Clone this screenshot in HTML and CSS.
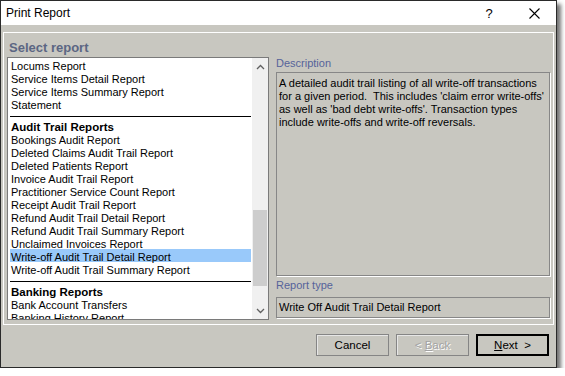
FILE: index.html
```html
<!DOCTYPE html>
<html lang="en">
<head>
    <meta charset="UTF-8" />
    <title>Print Report</title>
    <link rel="stylesheet" href="styles.css">
</head>
<body>
    <div class="window">
        <div class="titlebar">
            <span class="title">Print Report</span>
            <span class="help">?</span>
            <span class="close">
                <svg width="11" height="11" viewBox="0 0 11 11"><path d="M0.5 0.5 L10.5 10.5 M10.5 0.5 L0.5 10.5" stroke="#000" stroke-width="1.1" fill="none"/></svg>
            </span>
        </div>

        <div class="panel">
            <div class="panel-head">Select report</div>
            <div class="panel-body">
                <div class="listbox">
                    <ul class="items">
                        <li>Locums Report</li>
                        <li>Service Items Detail Report</li>
                        <li>Service Items Summary Report</li>
                        <li>Statement</li>
                        <li class="sep"></li>
                        <li class="group">Audit Trail Reports</li>
                        <li>Bookings Audit Report</li>
                        <li>Deleted Claims Audit Trail Report</li>
                        <li>Deleted Patients Report</li>
                        <li>Invoice Audit Trail Report</li>
                        <li>Practitioner Service Count Report</li>
                        <li>Receipt Audit Trail Report</li>
                        <li>Refund Audit Trail Detail Report</li>
                        <li>Refund Audit Trail Summary Report</li>
                        <li>Unclaimed Invoices Report</li>
                        <li class="selected">Write-off Audit Trail Detail Report</li>
                        <li>Write-off Audit Trail Summary Report</li>
                        <li class="sep"></li>
                        <li class="group">Banking Reports</li>
                        <li>Bank Account Transfers</li>
                        <li>Banking History Report</li>
                    </ul>
                    <div class="scrollbar">
                        <div class="arrow">
                            <svg width="9" height="6" viewBox="0 0 9 6"><path d="M1 5 L4.5 1.5 L8 5" stroke="#606060" stroke-width="1.3" fill="none"/></svg>
                        </div>
                        <div class="track"><div class="thumb"></div></div>
                        <div class="arrow">
                            <svg width="9" height="6" viewBox="0 0 9 6"><path d="M1 1 L4.5 4.5 L8 1" stroke="#606060" stroke-width="1.3" fill="none"/></svg>
                        </div>
                    </div>
                </div>

                <div class="details">
                    <div class="label">Description</div>
                    <div class="desc">
                        A detailed audit trail listing of all write-off transactions<br>
                        for a given period.&nbsp; This includes 'claim error write-offs'<br>
                        as well as 'bad debt write-offs'. Transaction types<br>
                        include write-offs and write-off reversals.
                    </div>
                    <div class="label label-type">Report type</div>
                    <div class="field">Write Off Audit Trail Detail Report</div>
                </div>
            </div>
        </div>

        <div class="buttons">
            <button class="btn">Cancel</button>
            <button class="btn disabled">&lt; <u>B</u>ack</button>
            <button class="btn default"><u>N</u>ext&nbsp; &gt;</button>
        </div>
    </div>
</body>
</html>
```

FILE: styles.css
```css
:root {
    --face: #c8c7c0;
    --label: #56639a;
}

body {
    margin: 0;
    background: #fff;
    font-family: "Liberation Sans", Arial, sans-serif;
    font-size: 11px;
    color: #000;
}

.window {
    width: 557px;
    height: 368px;
    box-sizing: border-box;
    border: 1px solid #2a2a2a;
    background: var(--face);
    box-shadow: 4px 4px 4px rgba(0, 0, 0, 0.55);
    display: flex;
    flex-direction: column;
}

.titlebar {
    height: 24px;
    background: #fff;
    display: flex;
    align-items: center;
    padding-left: 5px;
}

.title {
    font-size: 12px;
    flex: 1;
}

.help {
    font-size: 13px;
    width: 20px;
    text-align: center;
    margin-right: 24px;
}

.close {
    width: 22px;
    margin-right: 11px;
    display: flex;
    justify-content: center;
}

.panel {
    margin: 7px 2px 0 2px;
    height: 293px;
    box-sizing: border-box;
    border: 1px solid #fff;
    display: flex;
    flex-direction: column;
}

.panel-head {
    padding: 6px 0 0 5px;
    height: 18px;
    line-height: 18px;
    font-size: 13px;
    font-weight: bold;
    color: #5b6683;
}

.panel-body {
    display: flex;
    padding-left: 3px;
}

/* list box */
.listbox {
    width: 262px;
    height: 263px;
    box-sizing: border-box;
    border: 1px solid #7a7a7a;
    background: #fff;
    display: flex;
    overflow: hidden;
}

.items {
    list-style: none;
    margin: 0;
    padding: 0;
    flex: 1;
    overflow: hidden;
}

.items li {
    height: 12px;
    padding-top: 1px;
    line-height: 14px;
    margin: 0 1px 0 2px;
    padding-left: 1px;
    white-space: nowrap;
}

.items li.group {
    font-weight: bold;
    font-size: 11.5px;
}

.items li.selected {
    background: #99c9fa;
}

.items li.sep {
    height: 6px;
    border-bottom: 1px solid #000;
    margin-bottom: 2px;
    padding: 0;
}

.scrollbar {
    width: 16px;
    background: #f0f0f0;
    display: flex;
    flex-direction: column;
}

.arrow {
    height: 17px;
    display: flex;
    align-items: center;
    justify-content: center;
}

.track {
    flex: 1;
    padding-top: 135px;
}

.thumb {
    height: 76px;
    margin: 0 1px;
    background: #cdcdcd;
}

/* right column */
.details {
    width: 274px;
    margin-left: 7px;
    display: flex;
    flex-direction: column;
}

.label {
    height: 13px;
    line-height: 13px;
    color: var(--label);
    margin-bottom: 2px;
}

.label-type {
    margin-top: 3px;
    margin-bottom: 5px;
}

.desc {
    height: 204px;
    box-sizing: border-box;
    border: 1px solid #878787;
    box-shadow: 1px 1px 0 #fff;
    padding: 4px 2px 0 2px;
    line-height: 13px;
    white-space: nowrap;
}

.field {
    height: 21px;
    box-sizing: border-box;
    border: 1px solid #878787;
    box-shadow: 1px 1px 0 #fff;
    padding-left: 2px;
    line-height: 19px;
}

/* buttons */
.buttons {
    display: flex;
    justify-content: flex-end;
    gap: 7px;
    margin-top: 9px;
    padding-right: 7px;
}

.btn {
    width: 73px;
    height: 22px;
    box-sizing: border-box;
    border: 1px solid #858585;
    box-shadow: inset 1px 1px 0 #e6e6e6;
    background: var(--face);
    font-family: "Liberation Sans", Arial, sans-serif;
    font-size: 11.5px;
    color: #000;
    padding: 0;
}

.btn.disabled {
    color: #a3a3a3;
    text-shadow: 1px 1px 0 #fff;
}

.btn.default {
    border: 2px solid #000;
    box-shadow: none;
}
```
